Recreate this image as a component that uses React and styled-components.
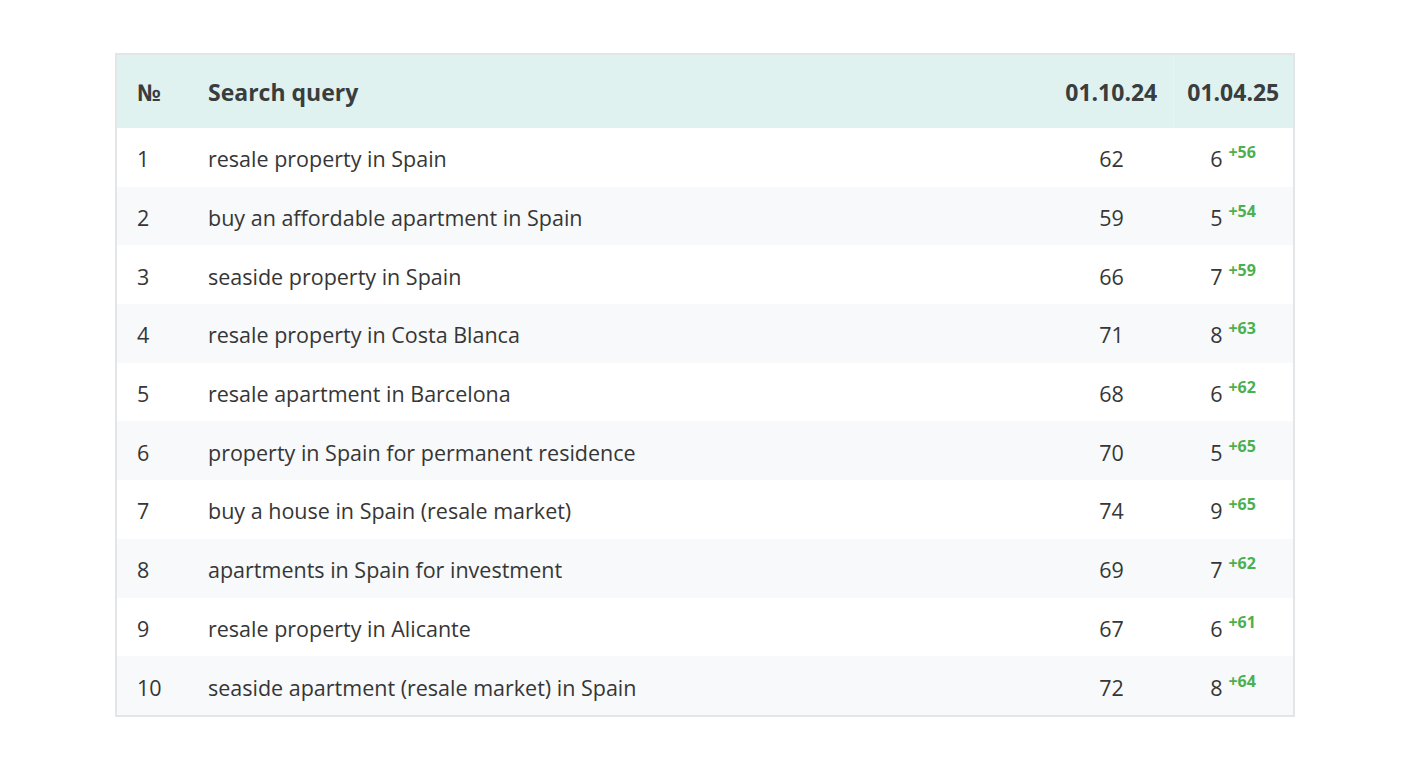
import styled, { createGlobalStyle } from 'styled-components';

const GlobalStyle = createGlobalStyle`
  body {
    margin: 0;
    background: #fff;
    font-family: "Open Sans", "Noto Sans", sans-serif;
  }
`;

const rows = [
  ['resale property in Spain', 62, 6, 56],
  ['buy an affordable apartment in Spain', 59, 5, 54],
  ['seaside property in Spain', 66, 7, 59],
  ['resale property in Costa Blanca', 71, 8, 63],
  ['resale apartment in Barcelona', 68, 6, 62],
  ['property in Spain for permanent residence', 70, 5, 65],
  ['buy a house in Spain (resale market)', 74, 9, 65],
  ['apartments in Spain for investment', 69, 7, 62],
  ['resale property in Alicante', 67, 6, 61],
  ['seaside apartment (resale market) in Spain', 72, 8, 64],
];

const Page = styled.div`
  padding: 53px 0 0 115px;
`;

const Frame = styled.div`
  width: 1180px;
  border: 2px solid #e3e6e8;
  box-sizing: border-box;
`;

const Table = styled.table`
  width: 100%;
  border-collapse: collapse;
  table-layout: fixed;
  color: #363636;
`;

const HeadRow = styled.tr`
  height: 73px;
  background: #e0f2f0;
`;

const Th = styled.th`
  box-sizing: border-box;
  font-size: 23px;
  font-weight: 700;
  color: #3a3d3d;
  text-align: ${p => (p.$center ? 'center' : 'left')};
  padding: 0 ${p => (p.$center ? '0' : '20px')};
  width: ${p => p.$w || 'auto'};
  border-left: ${p => (p.$sep ? '1px solid #e6f5f3' : 'none')};
`;

const Row = styled.tr`
  height: 58.7px;
  background: ${p => (p.$alt ? '#f7f9fa' : '#fff')};
`;

const Td = styled.td`
  font-size: 21.5px;
  text-align: ${p => (p.$center ? 'center' : 'left')};
  padding: 3px ${p => (p.$center ? '0' : '20px')} 0;
  white-space: nowrap;
`;

const Gain = styled.sup`
  color: #4caf50;
  font-size: 16px;
  font-weight: 700;
  margin-left: 6px;
  vertical-align: 9px;
  line-height: 0;
`;

export default function App() {
  return (
    <>
      <GlobalStyle />
      <Page>
        <Frame>
          <Table>
            <thead>
              <HeadRow>
                <Th $w="71px">№</Th>
                <Th>Search query</Th>
                <Th $center $w="123px">01.10.24</Th>
                <Th $center $sep $w="120px">01.04.25</Th>
              </HeadRow>
            </thead>
            <tbody>
              {rows.map(([q, a, b, d], i) => (
                <Row key={i} $alt={i % 2 === 1}>
                  <Td>{i + 1}</Td>
                  <Td>{q}</Td>
                  <Td $center>{a}</Td>
                  <Td $center>
                    {b}
                    <Gain>+{d}</Gain>
                  </Td>
                </Row>
              ))}
            </tbody>
          </Table>
        </Frame>
      </Page>
    </>
  );
}
